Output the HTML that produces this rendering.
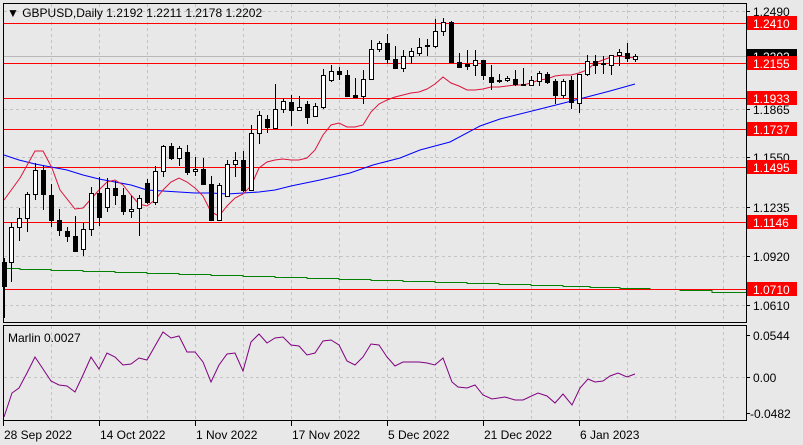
<!DOCTYPE html>
<html><head><meta charset="utf-8"><style>
html,body{margin:0;padding:0;background:#e8e8e8;}
svg{display:block;font-family:"Liberation Sans",Tahoma,sans-serif;font-size:12px;}
</style></head><body>
<svg id="s" width="803" height="445" xmlns="http://www.w3.org/2000/svg">
<rect width="803" height="445" fill="#e8e8e8"/>
<g id="grid" stroke="#c4c4c4" stroke-dasharray="3,3" stroke-width="1" shape-rendering="crispEdges"></g>
<g id="lines"></g>
<g id="candles" shape-rendering="crispEdges"></g>
<rect x="3.5" y="3.5" width="743" height="319" fill="none" stroke="#000" shape-rendering="crispEdges"/>
<rect x="3.5" y="325.5" width="743" height="95" fill="none" stroke="#000" shape-rendering="crispEdges"/>
<text x="7" y="17" fill="#000">▼ GBPUSD,Daily  1.2192 1.2211 1.2178 1.2202</text>
<text x="8" y="342" fill="#000">Marlin 0.0027</text>
<g id="axis" shape-rendering="crispEdges"></g>
</svg>
<script>
var NS="http://www.w3.org/2000/svg";
function el(p,t,a,txt){var e=document.createElementNS(NS,t);for(var k in a)e.setAttribute(k,a[k]);if(txt!=null)e.textContent=txt;document.getElementById(p).appendChild(e);return e;}
for(var x=51;x<746;x+=48){el('grid','line',{x1:x+.5,y1:4,x2:x+.5,y2:322});el('grid','line',{x1:x+.5,y1:326,x2:x+.5,y2:420});}
[11,109,157,207,256,305].forEach(function(y){el('grid','line',{x1:4,y1:y+.5,x2:746,y2:y+.5});});
[377].forEach(function(y){el('grid','line',{x1:4,y1:y+.5,x2:746,y2:y+.5});});
el('lines','line',{x1:4,y1:56.5,x2:746,y2:56.5,stroke:'#b8b8b8','shape-rendering':'crispEdges'});
el('lines','polyline',{points:"4,268.5 20,268.5 20,269.5 51,269.5 51,270.5 83,270.5 83,271.5 115,271.5 115,272.5 147,272.5 147,273.5 179,273.5 179,274.5 211,274.5 211,275.5 243,275.5 243,276.5 275,276.5 275,277.5 307,277.5 307,278.5 339,278.5 339,279.5 371,279.5 371,280.5 403,280.5 403,281.5 435,281.5 435,282.5 467,282.5 467,283.5 499,283.5 499,284.5 531,284.5 531,285.5 563,285.5 563,286.5 590,286.5 590,287.5 620,287.5 620,288.5 650,288.5 650,289.5 680,289.5 680,290.5 712,290.5 712,292.5 746,292.5",fill:'none',stroke:'#008000','shape-rendering':'crispEdges'});
[23,63,98,129,167,222,289].forEach(function(y){el('lines','rect',{x:4,y:y,width:742,height:1,fill:'#ff0000','shape-rendering':'crispEdges'});});
el('lines','polyline',{points:"4,155 19,160 35,164 51,167 67,170 83,175 99,179 115,182 131,185 147,190 163,191 179,192 195,193 211,193 227,194 243,193 259,192 275,190 291,186 320,180 350,173 373,165 400,158 420,150 450,142 480,126 500,119 540,109 560,104 587,97 610,91 635,84",fill:'none',stroke:'#0000ff'});
el('lines','polyline',{points:"4,200 20,178 35,151 43,151 52,168 60,190 75,209 83,208 91,199 99,190 107,182 115,180 123,185 131,195 139,204 147,206 155,200 163,190 171,182 179,178 187,182 195,188 203,196 211,212 219,216 227,206 235,198 243,194 251,186 259,168 267,162 275,160 283,159 291,160 299,160 307,158 315,150 323,135 331,125 339,123 347,127 355,127 363,125 371,112 379,104 387,100 395,97 403,95 411,93 419,92 427,89 435,84 443,77 451,83 459,86 467,90 475,90 483,89 491,87 499,87 507,86 515,85 523,85 531,83 539,80 547,79 555,76 563,75 571,75 579,73 587,70 595,63 603,60 611,57 619,56 627,57 635,58",fill:'none',stroke:'#dc143c'});
el('lines','polyline',{points:"4,417 12,393 19,388 27,373 35,357 43,369 51,381 59,385 67,386 75,392 83,375 91,357 99,369 107,353 115,357 123,365 131,364 139,358 147,360 155,346 163,332 171,338 179,336 187,352 195,352 203,362 211,382 219,365 227,354 235,353 243,371 251,342 259,334 267,343 275,338 283,337 291,345 299,346 307,355 315,353 323,341 331,340 339,345 347,361 355,365 363,357 371,344 379,345 387,357 395,366 403,362 411,362 419,362 427,363 435,365 443,358 452,382 458,387 467,388 475,385 483,395 492,399 505,397 515,400 523,400 538,393 547,396 555,403 563,394 572,405 580,388 588,379 595,382 603,381 610,376 618,373 627,377 635,374",fill:'none',stroke:'#800080'});
var C=[[4,262,286,258,318,0],[11,227,262,222,282,1],[19,218,227,208,241,1],[27,194,218,192,232,1],[35,170,194,163,200,1],[43,170,194,166,210,0],[51,195,220,184,227,0],[59,220,230,209,236,0],[67,231,236,227,242,0],[75,236,251,216,252,0],[83,229,249,223,256,1],[91,193,229,187,236,1],[99,193,217,177,226,0],[107,188,207,178,212,1],[115,188,195,181,205,0],[123,195,211,188,215,0],[131,209,211,196,218,1],[139,198,208,195,236,1],[147,183,202,179,204,0],[155,171,202,166,205,1],[163,146,171,145,177,1],[171,146,158,143,160,0],[179,148,158,146,166,1],[187,152,172,145,175,0],[195,169,171,157,176,1],[203,169,184,158,185,0],[211,184,220,176,221,0],[219,185,220,183,221,1],[227,164,196,160,197,1],[235,160,164,152,177,1],[243,160,190,151,192,0],[251,133,190,125,190,1],[259,115,133,111,144,1],[267,119,127,115,133,0],[275,109,128,84,129,1],[283,101,109,98,113,1],[291,102,110,95,126,0],[299,107,110,96,110,1],[307,104,117,101,124,0],[315,106,116,103,117,1],[323,75,107,69,109,1],[331,71,80,65,82,1],[339,71,74,67,80,0],[347,75,96,70,97,0],[355,95,97,78,97,0],[363,79,96,70,104,1],[371,49,79,40,80,1],[379,43,49,41,52,1],[387,43,59,34,64,0],[395,59,68,46,68,0],[403,56,68,50,72,1],[411,51,56,48,64,1],[419,47,53,38,56,1],[427,45,46,39,56,1],[435,31,46,19,48,1],[443,22,31,18,36,1],[451,22,62,21,63,0],[459,62,67,53,68,0],[467,64,66,50,70,0],[475,60,65,50,76,1],[483,60,75,60,80,0],[491,77,82,65,90,0],[499,80,81,74,83,1],[507,78,80,76,82,1],[515,79,84,70,86,0],[523,84,85,68,86,1],[531,80,85,76,86,1],[539,73,81,71,86,1],[547,74,82,72,84,0],[555,81,95,79,104,0],[563,81,95,79,98,1],[571,80,102,76,109,0],[579,74,103,74,113,1],[587,61,74,55,76,1],[595,61,65,55,74,0],[603,63,64,56,74,1],[611,55,65,55,75,1],[619,52,55,49,66,1],[627,53,58,43,62,0],[635,56,59,54,62,1]];
C.forEach(function(c){
 el('candles','line',{x1:c[0]+.5,y1:c[3],x2:c[0]+.5,y2:c[4],stroke:'#000'});
 var h=Math.max(1,c[2]-c[1]);
 if(c[5])el('candles','rect',{x:c[0]-1.5,y:c[1]+.5,width:4,height:h,fill:'#fff',stroke:'#000'});
 else el('candles','rect',{x:c[0]-2,y:c[1],width:5,height:h+1,fill:'#000'});
});
[[1.2490,11],[1.1865,109],[1.1550,157],[1.1235,207],[1.0920,256],[1.0610,305]].forEach(function(a){
 el('axis','line',{x1:746,y1:a[1]+.5,x2:750,y2:a[1]+.5,stroke:'#000'});
 el('axis','text',{x:753,y:a[1]+5,fill:'#000'},a[0].toFixed(4));});
el('axis','rect',{x:747,y:49,width:50,height:14,fill:'#000'});
el('axis','text',{x:753,y:61,fill:'#fff'},'1.2202');
[['1.2410',23],['1.2155',63],['1.1933',98],['1.1737',129],['1.1495',167],['1.1146',222],['1.0710',289]].forEach(function(a){
 el('axis','rect',{x:747,y:a[1]-7,width:50,height:14,fill:'#ff0000'});
 el('axis','text',{x:753,y:a[1]+5,fill:'#fff'},a[0]);});
[['0.0544',335],['0.00',377],['-0.0482',413]].forEach(function(a){
 el('axis','line',{x1:746,y1:a[1]+.5,x2:750,y2:a[1]+.5,stroke:'#000'});
 el('axis','text',{x:(a[0][0]=='-'?750:753),y:a[1]+5,fill:'#000'},a[0]);});
[['28 Sep 2022',3],['14 Oct 2022',99],['1 Nov 2022',195],['17 Nov 2022',291],['5 Dec 2022',387],['21 Dec 2022',483],['6 Jan 2023',579]].forEach(function(a){
 el('axis','line',{x1:a[1]+.5,y1:421,x2:a[1]+.5,y2:426,stroke:'#000'});
 el('axis','text',{x:a[1]+1,y:439,fill:'#000'},a[0]);});
</script>
</body></html>
